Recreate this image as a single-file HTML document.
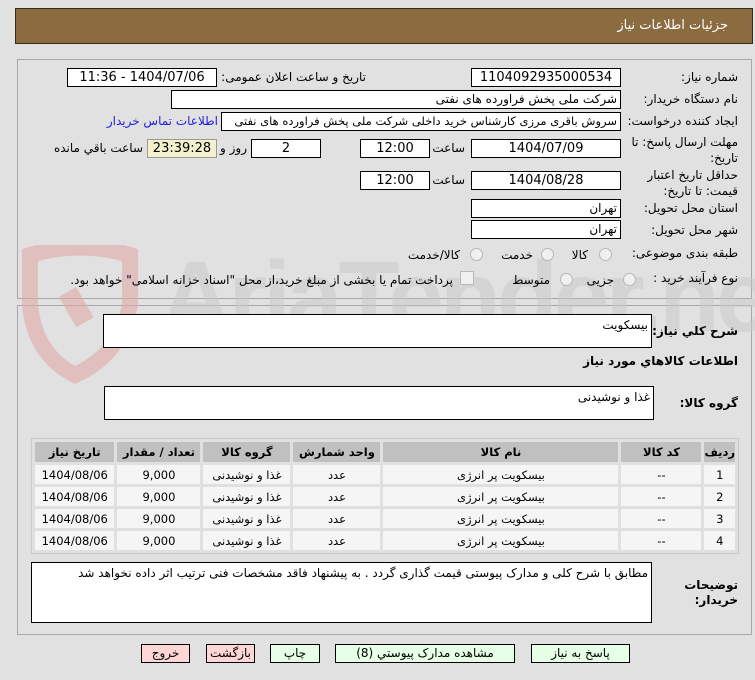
<!DOCTYPE html>
<html><head><meta charset="utf-8"><style>
body{margin:0;width:755px;height:680px;background:#e1e1e1;font-family:"DejaVu Sans","Liberation Sans",sans-serif;font-size:12px;color:#000;position:relative;overflow:hidden}
.a{position:absolute;white-space:nowrap}
.hd{left:15px;top:8px;width:736px;height:34px;background:#8b6b40;border:1px solid #3a2a15}
.pn{border:1px solid #a8a8a8}
.in{position:absolute;background:#fff;border:1px solid #000;box-sizing:border-box;font-size:13px;text-align:center;line-height:17px;direction:rtl;white-space:nowrap;overflow:hidden}
.r{text-align:right;padding-right:3px;font-size:12px}
.lb{position:absolute;direction:rtl;text-align:right;font-size:12px;white-space:nowrap}
.rd{position:absolute;width:11px;height:11px;border-radius:50%;border:1px solid #b8b8b8;background:#f0f0f0}
table{border-collapse:separate;border-spacing:3px 3px;position:absolute;left:31px;top:438px;width:708px;background:#e0e0e0;border:1px solid #c8c8c8;direction:rtl}
td,th{text-align:center;height:19px;padding:0;font-size:11.5px;white-space:nowrap}
th{background:#c0c0c0;height:20px}
td{background:#f5f5f5}
.bt{position:absolute;top:644px;height:19px;box-sizing:border-box;border:1px solid #000;text-align:center;font-size:12px;line-height:17px}
.g{background:#e6ffe6}.p{background:#ffd6d6}
.wmw{position:absolute;left:0;top:230px;width:755px;height:160px;overflow:hidden}
.wm{position:absolute;left:160px;top:10px;font-size:100px;font-weight:bold;color:#c8c8c8;opacity:.5;letter-spacing:-4px;font-family:"Liberation Sans",sans-serif;white-space:nowrap}
</style></head><body>
<div class="a hd"></div>
<div class="lb" style="right:27px;top:18px;color:#fff;font-size:13px">جزئیات اطلاعات نیاز</div>
<div class="a pn" style="left:17px;top:59px;width:733px;height:238px"></div>
<div class="a pn" style="left:17px;top:305px;width:733px;height:328px"></div>
<div class="wmw"><div class="wm">AriaTender.net</div></div>
<svg class="a" style="left:20px;top:245px" width="130" height="140"><path d="M10 10 Q60 -5 110 10 L110 60 Q100 110 55 130 Q15 110 10 60 Z" fill="none" stroke="#e3a9a9" stroke-width="16" opacity=".6"/><rect x="45" y="45" width="20" height="35" fill="#e3a9a9" opacity=".6" transform="rotate(-30 55 60)"/></svg>

<div class="lb" style="right:17px;top:70px">شماره نیاز:</div>
<div class="in" style="left:471px;top:68px;width:150px;height:19px">1104092935000534</div>
<div class="lb" style="right:389px;top:70px">تاریخ و ساعت اعلان عمومی:</div>
<div class="in" style="left:67px;top:68px;width:150px;height:19px">1404/07/06 - 11:36</div>

<div class="lb" style="right:17px;top:92px">نام دستگاه خریدار:</div>
<div class="in r" style="left:171px;top:90px;width:450px;height:19px">شرکت ملی پخش فراورده های نفتی</div>

<div class="lb" style="right:17px;top:114px">ایجاد کننده درخواست:</div>
<div class="in r" style="left:221px;top:112px;width:400px;height:19px;font-size:11.5px">سروش باقری مرزی کارشناس خرید داخلی شرکت ملی پخش فراورده های نفتی</div>
<div class="lb" style="right:537px;top:114px;color:#2020e0">اطلاعات تماس خریدار</div>

<div class="lb" style="right:17px;top:134px;line-height:16px">مهلت ارسال پاسخ: تا<br>تاریخ:</div>
<div class="in" style="left:471px;top:139px;width:150px;height:19px">1404/07/09</div>
<div class="lb" style="right:290px;top:141px">ساعت</div>
<div class="in" style="left:360px;top:139px;width:70px;height:19px">12:00</div>
<div class="in" style="left:251px;top:139px;width:70px;height:19px">2</div>
<div class="lb" style="right:508px;top:141px">روز و</div>
<div class="in" style="left:147px;top:139px;width:70px;height:19px;background:#f3f0cc;border-color:#999">23:39:28</div>
<div class="lb" style="right:612px;top:141px">ساعت باقي مانده</div>

<div class="lb" style="right:17px;top:167px;line-height:16px">حداقل تاریخ اعتبار<br>قیمت: تا تاریخ:</div>
<div class="in" style="left:471px;top:171px;width:150px;height:19px">1404/08/28</div>
<div class="lb" style="right:290px;top:173px">ساعت</div>
<div class="in" style="left:360px;top:171px;width:70px;height:19px">12:00</div>

<div class="lb" style="right:17px;top:201px">استان محل تحویل:</div>
<div class="in r" style="left:471px;top:199px;width:150px;height:19px">تهران</div>
<div class="lb" style="right:17px;top:223px">شهر محل تحویل:</div>
<div class="in r" style="left:471px;top:220px;width:150px;height:19px">تهران</div>

<div class="lb" style="right:17px;top:246px">طبقه بندی موضوعی:</div>
<div class="rd" style="left:599px;top:248px"></div><div class="lb" style="right:167px;top:248px">کالا</div>
<div class="rd" style="left:541px;top:248px"></div><div class="lb" style="right:222px;top:248px">خدمت</div>
<div class="rd" style="left:470px;top:248px"></div><div class="lb" style="right:295px;top:248px">کالا/خدمت</div>

<div class="lb" style="right:17px;top:271px">نوع فرآیند خرید :</div>
<div class="rd" style="left:623px;top:273px"></div><div class="lb" style="right:141px;top:273px">جزیی</div>
<div class="rd" style="left:560px;top:273px"></div><div class="lb" style="right:205px;top:273px">متوسط</div>
<div class="a" style="left:460px;top:271px;width:12px;height:12px;border:1px solid #b8b8b8;background:#f0f0f0"></div>
<div class="lb" style="right:302px;top:273px;font-size:12px">پرداخت تمام یا بخشی از مبلغ خرید،از محل "اسناد خزانه اسلامی" خواهد بود.</div>

<div class="lb" style="right:17px;top:324px;font-weight:bold">شرح کلي نياز:</div>
<div class="in r" style="left:103px;top:314px;width:549px;height:34px;text-align:right;line-height:20px">بیسکویت</div>
<div class="lb" style="right:17px;top:354px;font-weight:bold">اطلاعات کالاهاي مورد نياز</div>
<div class="lb" style="right:17px;top:396px;font-weight:bold">گروه کالا:</div>
<div class="in r" style="left:104px;top:386px;width:550px;height:34px;text-align:right;line-height:20px">غذا و نوشیدنی</div>

<table>
<tr><th style="width:27px">رديف</th><th style="width:80px">کد کالا</th><th style="width:235px">نام کالا</th><th style="width:87px">واحد شمارش</th><th style="width:87px">گروه کالا</th><th style="width:83px">تعداد / مقدار</th><th>تاريخ نياز</th></tr>
<tr><td>1</td><td>--</td><td>بیسکویت پر انرژی</td><td>عدد</td><td>غذا و نوشیدنی</td><td>9,000</td><td>1404/08/06</td></tr>
<tr><td>2</td><td>--</td><td>بیسکویت پر انرژی</td><td>عدد</td><td>غذا و نوشیدنی</td><td>9,000</td><td>1404/08/06</td></tr>
<tr><td>3</td><td>--</td><td>بیسکویت پر انرژی</td><td>عدد</td><td>غذا و نوشیدنی</td><td>9,000</td><td>1404/08/06</td></tr>
<tr><td>4</td><td>--</td><td>بیسکویت پر انرژی</td><td>عدد</td><td>غذا و نوشیدنی</td><td>9,000</td><td>1404/08/06</td></tr>
</table>

<div class="lb" style="right:17px;top:578px;font-weight:bold;line-height:15px">توضیحات<br>خریدار:</div>
<div class="in r" style="left:31px;top:562px;width:621px;height:61px;text-align:right;line-height:20px;font-size:12px">مطابق با شرح کلی و مدارک پیوستی قیمت گذاری گردد . به پیشنهاد فاقد مشخصات فنی ترتیب اثر داده نخواهد شد</div>

<div class="bt g" style="left:531px;width:99px">پاسخ به نياز</div>
<div class="bt g" style="left:335px;width:180px">مشاهده مدارک پيوستي (8)</div>
<div class="bt g" style="left:270px;width:50px">چاپ</div>
<div class="bt p" style="left:206px;width:49px">بازگشت</div>
<div class="bt p" style="left:141px;width:49px">خروج</div>
</body></html>
